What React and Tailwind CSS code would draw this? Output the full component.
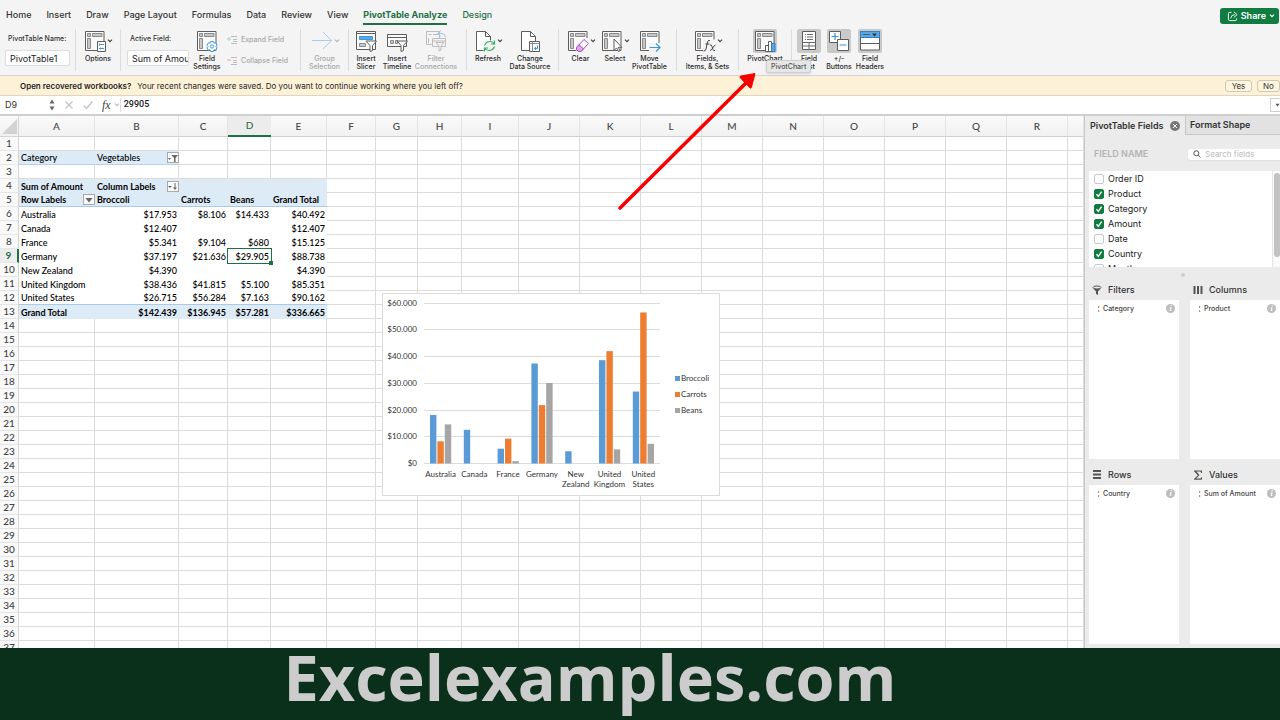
import React from "react";

const INK = "#5c5c5c";
const BLUE = "#3a96dd";

const COLUMNS = [
  ["A", "w-[76px]"], ["B", "w-[84px]"], ["C", "w-[49px]"], ["D", "w-[43px]"],
  ["E", "w-[56px]"], ["F", "w-[49px]"], ["G", "w-[42px]"], ["H", "w-[44px]"],
  ["I", "w-[57px]"], ["J", "w-[61px]"], ["K", "w-[61px]"], ["L", "w-[61px]"],
  ["M", "w-[61px]"], ["N", "w-[61px]"], ["O", "w-[61px]"], ["P", "w-[61px]"],
  ["Q", "w-[61px]"], ["R", "w-[61px]"], ["", "w-auto"],
];

const ROWS = {
  2: ["Category", "Vegetables"],
  4: ["Sum of Amount", "Column Labels"],
  5: ["Row Labels", "Broccoli", "Carrots", "Beans", "Grand Total"],
  6: ["Australia", "$17.953", "$8.106", "$14.433", "$40.492"],
  7: ["Canada", "$12.407", "", "", "$12.407"],
  8: ["France", "$5.341", "$9.104", "$680", "$15.125"],
  9: ["Germany", "$37.197", "$21.636", "$29.905", "$88.738"],
  10: ["New Zealand", "$4.390", "", "", "$4.390"],
  11: ["United Kingdom", "$38.436", "$41.815", "$5.100", "$85.351"],
  12: ["United States", "$26.715", "$56.284", "$7.163", "$90.162"],
  13: ["Grand Total", "$142.439", "$136.945", "$57.281", "$336.665"],
};

const CHART = [
  [["Australia"], [17953, 8106, 14433]],
  [["Canada"], [12407, 0, 0]],
  [["France"], [5341, 9104, 680]],
  [["Germany"], [37197, 21636, 29905]],
  [["New", "Zealand"], [4390, 0, 0]],
  [["United", "Kingdom"], [38436, 41815, 5100]],
  [["United", "States"], [26715, 56284, 7163]],
];
const SERIES = [["Broccoli", "#5b9bd5"], ["Carrots", "#ed7d31"], ["Beans", "#a5a5a5"]];

function Icon({ children }) {
  return (
    <svg viewBox="0 0 22 22" className="size-[22px] shrink-0" fill="none" stroke={INK} strokeWidth="1" aria-hidden="true">
      {children}
    </svg>
  );
}

function Pivot({ children }) {
  return (
    <Icon>
      <path d="M1.500 1.500h18.500v19h-18.500z" fill="#fafafa" />
      <path d="M3.500 3.500h3v3h-3zM8.500 3.500h9.500v3h-9.500zM3.500 8.500h3v10h-3z" fill="#c8c8c8" stroke="#8a8a8a" />
      {children}
    </Icon>
  );
}

const Funnel = ({ x = 11, y = 11, color = INK }) => (
  <path d={`M${x} ${y}h10.500l-4 4.500v5l-2.500 1v-6z`} fill="#fff" stroke={color} />
);

const icons = {
  options: (
    <Pivot>
      <path d="M13.500 11.500h8v10h-8z" fill="#fff" />
      <path d="M15 14.500h5M15 18.500h5" stroke={BLUE} />
      <path d="M15.500 13.500v2M16.500 17.500v2" stroke={BLUE} />
    </Pivot>
  ),
  settings: (
    <Pivot>
      <path d="M14.600 11.500h2.800l.5 1.700 1.700-.4 1.500 2.500-1.200 1.200 1.200 1.300-1.500 2.400-1.700-.4-.5 1.700h-2.800l-.5-1.700-1.700.4-1.500-2.400 1.200-1.300-1.200-1.200 1.500-2.500 1.700.4z" fill="#fff" stroke={BLUE} />
      <circle cx="16" cy="16.500" r="1.600" stroke={BLUE} />
    </Pivot>
  ),
  group: (
    <Icon>
      <path d="M1 10.500h19M12 2l8.500 8.500L12 19" stroke="#a9cdee" />
    </Icon>
  ),
  slicer: (
    <Icon>
      <path d="M1.500 1.500h19v18h-19z" fill="#fafafa" />
      <path d="M1.500 3.500h19" />
      <path d="M4.500 6.500h13v3h-13z" fill="#5ba7e6" stroke={BLUE} />
      <path d="M4.500 13.500h6v3h-6z" fill="#c8c8c8" stroke="#8a8a8a" />
      <Funnel />
    </Icon>
  ),
  timeline: (
    <Icon>
      <path d="M1.500 4.500h19v12h-19z" fill="#fafafa" />
      <path d="M1.500 7.500h19" />
      <path d="M4.500 10.500h3v3h-3zM9.500 10.500h2v3h-2z" fill="#c8c8c8" stroke="#8a8a8a" />
      <Funnel />
    </Icon>
  ),
  connections: (
    <Icon>
      <g stroke="#bdbdbd">
        <path d="M1.500 1.500h13v13h-13z" />
        <path d="M3.500 4.500h3M8 4.500h5M3.500 8v5" />
        <path d="M7.500 8.500h13v8h-13z" fill="#f4f4f4" />
        <path d="M7.500 11h13" />
        <path d="M11 12.500h8l-3 3.500v4l-2 1v-5z" fill="#f4f4f4" />
      </g>
      <path d="M13 3.500h4q3.500 0 3.500 4M16 .5l-3.500 3L16 6.500" stroke="#9fc6ea" />
    </Icon>
  ),
  refresh: (
    <Icon>
      <path d="M2.500 1.500h9l5 5v14h-14z" fill="#fff" />
      <path d="M11.500 1.500v5h5" />
      <path d="M9.500 10.500H22V22H9.500z" fill="#f4f4f4" stroke="none" />
      <path d="M10.500 15.500q1.500-4 5.500-4 3 0 4.500 2.500M20.500 10.500V14H17M20.500 16.500q-1.500 4-5.500 4-3 0-4.500-2.500M10.500 21.500V18H14" stroke="#2fae5f" strokeWidth="1.200" />
    </Icon>
  ),
  source: (
    <Icon>
      <path d="M2.500 1.500h9l5 5v14h-14z" fill="#fff" />
      <path d="M11.500 1.500v5h5" />
      <path d="M10.500 11.500h10v10h-10z" fill="#fff" />
      <path d="M10.500 13.500h10M13.500 11.500v10" stroke="#8a8a8a" />
      <path d="M15.500 18.500h3v-3M17 17l-1.500 1.500L17 20" stroke={BLUE} />
    </Icon>
  ),
  clear: (
    <Pivot>
      <path d="M8.500 16 16 8h6v13H9.500z" fill="#f4f4f4" stroke="none" />
      <path d="m9.500 17.500 7.500-8 4.500 4-7.500 8h-2.500l-2-2z" fill="#fff" stroke="#a94fc0" />
      <path d="m9.500 17.500 2.500-2.700 4.500 4-2.500 2.700h-2.500l-2-2z" fill="#dca6ea" stroke="#a94fc0" />
    </Pivot>
  ),
  select: (
    <Pivot>
      <path d="M13 9v11.500l2.600-2.600 1.700 3.600 1.700-.8-1.700-3.400h3.500z" fill="#fff" />
    </Pivot>
  ),
  move: (
    <Pivot>
      <path d="M10 13h12v9H10z" fill="#f4f4f4" stroke="none" />
      <path d="M10.500 17.500h10.500M17 13.500l4 4-4 4" stroke={BLUE} strokeWidth="1.200" />
    </Pivot>
  ),
  fields: (
    <Pivot>
      <path d="M9 9.500h13V22H9z" fill="#f4f4f4" stroke="none" />
      <path d="M9.500 21q2 .3 2.500-2l1.500-7q.5-2 2.500-1.500M11.500 14h4M16 15q1.500-.5 2 1.500l1 3q.5 1.500 2 1M21.500 15q-1 0-2.500 2.500-1.500 3-3 3" stroke="#444" />
    </Pivot>
  ),
  chart: (
    <Pivot>
      <path d="M11.500 15.500h3v6h-3zM14.500 11.500h3v10h-3z" fill="#fff" />
      <path d="M17.500 13.500h3.500v8h-3.500z" fill="#5ba7e6" stroke="#2b7fc4" />
    </Pivot>
  ),
  list: (
    <Icon>
      <path d="M4.500 1.500h13v18h-13z" fill="#fff" />
      <path d="M4.500 12.500h13M4.500 16h13M11 12.500v7M7 4.500h1M9 4.500h6M7 7h1M9 7h6M7 9.500h1M9 9.500h6" stroke="#6a6a6a" />
    </Icon>
  ),
  plusminus: (
    <Icon>
      <path d="M1.500 1.500h11v11h-11z" fill="#fff" />
      <path d="M9.500 9.500h11v11h-11z" fill="#fff" />
      <path d="M3.500 6.500h7M7 3v7M11.500 15h7" stroke={BLUE} strokeWidth="1.200" />
    </Icon>
  ),
  headers: (
    <Icon>
      <path d="M1.500 1.500h19v18.500h-19z" fill="#fff" />
      <path d="M1.500 1.500h19v6h-19z" fill="#5ba7e6" stroke="#2b7fc4" />
      <path d="M1.500 13.500h19M4 4.500h7" />
      <path d="M13 3.500h5l-2.500 3z" fill="#333" stroke="none" />
    </Icon>
  ),
};

function Chevron({ className = "text-[#444]" }) {
  return (
    <svg viewBox="0 0 6 4" className={`h-1 w-[6px] shrink-0 ${className}`} fill="none" stroke="currentColor" strokeWidth="1.200" aria-hidden="true">
      <path d="M1 .7l2 2 2-2" />
    </svg>
  );
}

function Tool({ icon, lines, width, menu, active, disabled }) {
  return (
    <button type="button" disabled={disabled} className={`flex shrink-0 flex-col items-center ${width} ${disabled ? "text-[#a8a8a8]" : "text-[#2a2a2a]"}`}>
      <span className="flex items-center">
        <span className={`flex size-6 items-center justify-center rounded-xs ${active ? "bg-[#c9c9c9]" : ""}`}>{icons[icon]}</span>
        {menu && <Chevron className={disabled ? "text-[#b5b5b5]" : "text-[#444]"} />}
      </span>
      <span className="mt-0.5 flex flex-col items-center text-[7px] leading-2 font-medium whitespace-nowrap">
        {lines.map((l) => <span key={l}>{l}</span>)}
      </span>
    </button>
  );
}

const Sep = () => <span className="h-[42px] w-px shrink-0 bg-[#dcdcdc]" />;

function SmallTool({ label, color, mark }) {
  return (
    <button type="button" disabled className="flex items-center gap-1 text-[7px] leading-3 font-medium whitespace-nowrap text-[#a8a8a8]">
      <svg viewBox="0 0 10 8" className="h-2 w-2.5" fill="none" stroke="#bdbdbd" aria-hidden="true">
        <path d="M4 .5h6M6 3.500h4M6 5.500h4M4 7.500h6" />
        <path d={mark} stroke={color} />
      </svg>
      {label}
    </button>
  );
}

function Ribbon() {
  const tabs = ["Home", "Insert", "Draw", "Page Layout", "Formulas", "Data", "Review", "View"];
  const input = "mt-[5px] h-4 w-full rounded-xs border border-[#dcdcdc] bg-white pl-1 text-[9px] text-[#222]";
  return (
    <header className="shrink-0 border-b border-[#d4d4d4] bg-[#f4f4f4]">
      <div className="flex h-7 items-center justify-between pt-1 pl-1.5">
        <nav className="flex gap-[15px] text-[9px] leading-4 font-medium whitespace-nowrap text-[#333]">
          {tabs.map((t) => <a key={t} href="#">{t}</a>)}
          <a href="#" className="border-b-2 border-[#1e7145] font-bold text-[#1e7145]">PivotTable Analyze</a>
          <a href="#" className="text-[#1e7145]">Design</a>
        </nav>
        <button type="button" className="mr-px flex h-4 items-center gap-[3px] rounded-[3px] bg-[#107c41] pr-1 pl-[7px] text-[9px] font-semibold text-white">
          <svg viewBox="0 0 12 12" className="size-[11px]" fill="none" stroke="currentColor" strokeWidth="1" aria-hidden="true">
            <path d="M5 1.500H3q-1.500 0-1.500 1.500v6q0 1.500 1.500 1.500h6q1.500 0 1.500-1.500V8M4 8q.5-4 4.500-4M7.500 1l3.500 3-3.500 3" />
          </svg>
          Share
          <Chevron className="text-white" />
        </button>
      </div>
      <div className="flex h-[47px] overflow-hidden pt-px">
        <div className="flex w-[75px] shrink-0 flex-col px-[5px] pt-1">
          <label htmlFor="pt-name" className="pl-[3px] text-[7px] leading-3 font-medium whitespace-nowrap text-[#333]">PivotTable Name:</label>
          <input id="pt-name" defaultValue="PivotTable1" className={input} />
        </div>
        <Sep />
        <Tool icon="options" lines={["Options"]} width="w-[44px]" menu />
        <Sep />
        <div className="flex w-[72px] shrink-0 flex-col pt-1 pr-1 pl-[6px]">
          <label htmlFor="active-field" className="pl-[3px] text-[7px] leading-3 font-medium whitespace-nowrap text-[#333]">Active Field:</label>
          <input id="active-field" defaultValue="Sum of Amount" className={input} />
        </div>
        <Tool icon="settings" lines={["Field", "Settings"]} width="w-[28px]" />
        <div className="flex w-[79px] shrink-0 flex-col gap-[9px] pt-[5px] pl-[6px]">
          <SmallTool label="Expand Field" color="#a5d8b8" mark="M0 3h4M2 1v4" />
          <SmallTool label="Collapse Field" color="#e5a8a8" mark="M0 3h4" />
        </div>
        <Sep />
        <Tool icon="group" lines={["Group", "Selection"]} width="w-[47px]" menu disabled />
        <Sep />
        <div className="flex pr-[5px]">
          <Tool icon="slicer" lines={["Insert", "Slicer"]} width="w-[34px]" />
          <Tool icon="timeline" lines={["Insert", "Timeline"]} width="w-[28px]" />
          <Tool icon="connections" lines={["Filter", "Connections"]} width="w-[50px]" disabled />
        </div>
        <Sep />
        <div className="flex pr-[7px]">
          <Tool icon="refresh" lines={["Refresh"]} width="w-[42px]" menu />
          <Tool icon="source" lines={["Change", "Data Source"]} width="w-[42px]" />
        </div>
        <Sep />
        <div className="flex pr-[5px]">
          <Tool icon="clear" lines={["Clear"]} width="w-[43px]" menu />
          <Tool icon="select" lines={["Select"]} width="w-[26px]" menu />
          <Tool icon="move" lines={["Move", "PivotTable"]} width="w-[43px]" />
        </div>
        <Sep />
        <Tool icon="fields" lines={["Fields,", "Items, & Sets"]} width="w-[61px]" menu />
        <Sep />
        <Tool icon="chart" lines={["PivotChart"]} width="w-[52px]" active />
        <Sep />
        <Tool icon="list" lines={["Field", "List"]} width="w-[34px]" active />
        <Tool icon="plusminus" lines={["+/-", "Buttons"]} width="w-[26px]" active />
        <Tool icon="headers" lines={["Field", "Headers"]} width="w-[36px]" active />
      </div>
    </header>
  );
}

function RecoveryBar() {
  const btn = "h-3 rounded-[3px] border border-[#cfc8b4] bg-[#fdf5dd] leading-none text-[#333]";
  return (
    <div className="flex h-5 shrink-0 items-center justify-between border-b border-[#ddd6c2] bg-[#fdf2d8] pl-5 text-[8px] whitespace-nowrap text-[#1f1f1f]">
      <p className="flex gap-[6px]">
        <strong className="font-semibold">Open recovered workbooks?</strong>
        <span>Your recent changes were saved. Do you want to continue working where you left off?</span>
      </p>
      <div className="flex gap-[5px]">
        <button type="button" className={`${btn} w-[27px]`}>Yes</button>
        <button type="button" className={`${btn} w-[23px]`}>No</button>
      </div>
    </div>
  );
}

function FormulaBar() {
  return (
    <div className="flex h-5 shrink-0 items-center border-b-2 border-[#cfcfcf] bg-white">
      <input aria-label="Name box" defaultValue="D9" className="w-[49px] pl-[5px] text-[9px] text-[#333]" />
      <svg viewBox="0 0 6 12" className="h-3 w-[6px]" fill="#666" aria-hidden="true">
        <path d="M3 .5 5.500 4.500h-5zM3 11.500.5 7.500h5z" />
      </svg>
      <div className="ml-[9px] flex items-center gap-[9px]">
        <svg viewBox="0 0 10 10" className="size-2.5" stroke="#c4c4c4" strokeWidth="1.300" fill="none" aria-hidden="true"><path d="m1.500 1.500 7 7m0-7-7 7" /></svg>
        <svg viewBox="0 0 10 10" className="size-2.5" stroke="#c4c4c4" strokeWidth="1.300" fill="none" aria-hidden="true"><path d="m.5 5.500 3 3 6-7" /></svg>
        <span className="font-['Liberation_Serif',serif] text-[12px] leading-3 text-[#444] italic">fx</span>
      </div>
      <Chevron className="ml-[3px] text-[#bbb]" />
      <input aria-label="Formula" defaultValue="29905" className="min-w-0 flex-1 border-l border-[#ddd] pl-[3px] font-[Roboto,sans-serif] text-[9px] font-medium text-[#222]" />
      <button type="button" aria-label="Expand formula bar" className="flex h-[14px] w-2.5 items-center border border-r-0 border-[#d0d0d0] pl-1">
        <svg viewBox="0 0 6 4" className="h-1 w-[6px]" fill="#555" aria-hidden="true"><path d="M.5.5h5L3 3.800z" /></svg>
      </button>
    </div>
  );
}

function CellButton({ label, children }) {
  return (
    <button type="button" aria-label={label} className="flex h-[11px] w-3 shrink-0 items-center justify-center border border-[#a9a9a9] bg-[#fafafa]">
      <svg viewBox="0 0 10 8" className="h-2 w-2.5" fill="#666" aria-hidden="true">{children}</svg>
    </button>
  );
}

const CELL_BUTTONS = {
  "2-1": <CellButton label="Filter category"><path d="M0 4h3L1.500 6zM3.500 1H10L7.500 4v4H6V4z" /></CellButton>,
  "4-1": <CellButton label="Sort columns"><path d="M0 4h4L2 6zM6.500 1h1v4.500H9L7 8 5 5.500h1.500z" /></CellButton>,
  "5-0": <CellButton label="Filter rows"><path d="M1.500 2h7L5 6.500z" /></CellButton>,
};

function cellStyle(row, col) {
  const inPivot = row >= 4 && row <= 13 && col <= 4;
  if (row === 2 && col <= 1) return "border-b border-[#b4d2ec] bg-[#ddebf7] font-medium";
  if (!inPivot) return "border-r border-b border-[#dcdcdc]";
  if (row === 4) return "bg-[#ddebf7] font-bold";
  if (row === 5) return "border-b border-[#a9cbe9] bg-[#ddebf7] font-bold";
  if (row === 12) return "border-b border-[#a9cbe9] font-medium";
  if (row === 13) return "bg-[#ddebf7] font-bold";
  return "font-medium";
}

function Cell({ row, col }) {
  const text = ROWS[row]?.[col] ?? "";
  const selected = row === 9 && col === 3;
  const numeric = text.startsWith("$");
  return (
    <td className={`relative h-[14px] p-0 text-black ${cellStyle(row, col)}`}>
      {text && (
        <div className={`flex h-[13px] items-center whitespace-nowrap ${numeric ? "justify-end pr-0.5" : "justify-between pl-0.5"}`}>
          <span>{text}</span>
          {CELL_BUTTONS[`${row}-${col}`]}
        </div>
      )}
      {selected && (
        <span className="absolute -inset-px border border-[#1e7145]">
          <span className="absolute -right-[2px] -bottom-[2px] size-1 bg-[#1e7145]" />
        </span>
      )}
    </td>
  );
}

function Chart() {
  const y = (v) => 170 - (v / 60000) * 160.5;
  return (
    <svg viewBox="0 0 338 203" className="absolute top-[177px] left-[382px] h-[203px] w-[338px] font-[Lato,sans-serif]" role="img" aria-label="Sales by country">
      <rect x=".5" y=".5" width="337" height="202" fill="#fff" stroke="#dcdcdc" />
      {[0, 1, 2, 3, 4, 5, 6].map((i) => (
        <g key={i}>
          <path d={`M42 ${Math.round(y(i * 10000)) + 0.5}h236`} stroke="#dcdcdc" />
          <text x="35" y={y(i * 10000) + 3} textAnchor="end" fontSize="8" fill="#333">{i ? `$${i}0.000` : "$0"}</text>
        </g>
      ))}
      {CHART.map(([lines, values], g) => {
        const center = 58.5 + g * 33.8;
        return (
          <g key={lines.join(" ")}>
            {values.map((v, s) => v > 0 && (
              <rect key={s} x={center - 10.5 + s * 7.4} y={y(v)} width="6.400" height={170.5 - y(v)} fill={SERIES[s][1]} />
            ))}
            {lines.map((l, i) => (
              <text key={l} x={center} y={183.5 + i * 10.5} textAnchor="middle" fontSize="8" fill="#333">{l}</text>
            ))}
          </g>
        );
      })}
      {SERIES.map(([name, color], i) => (
        <g key={name}>
          <rect x="293" y={83 + i * 16} width="5" height="5" fill={color} />
          <text x="299" y={88 + i * 16} fontSize="8" fill="#333">{name}</text>
        </g>
      ))}
    </svg>
  );
}

function Sheet() {
  const rows = Array.from({ length: 37 }, (_, i) => i + 1);
  return (
    <main className="relative min-w-0 flex-1 overflow-hidden bg-white">
      <table className="w-full table-fixed border-separate border-spacing-0 font-[Lato,sans-serif] text-[9px] leading-[13px]">
        <thead>
          <tr className="h-[21px] bg-gradient-to-b from-[#fafafa] to-[#f1f1f1] text-[10px] text-[#444]">
            <th className="w-[19px] border-r border-b border-[#d4d4d4] p-0">
              <svg viewBox="0 0 18 20" className="h-5 w-[18px]" fill="#d2d2d2" aria-hidden="true"><path d="M17 3v15H2z" /></svg>
            </th>
            {COLUMNS.map(([name, width]) => (
              <th key={name} scope="col" className={`${width} p-0 font-medium ${name === "D" ? "border-b-2 border-[#1e7145] bg-[#ececec] text-[#1e7145]" : "border-r border-b border-r-[#e4e4e4] border-b-[#cfcfcf]"}`}>{name}</th>
            ))}
          </tr>
        </thead>
        <tbody>
          {rows.map((r) => (
            <tr key={r} className="h-[14px]">
              <th scope="row" className={`border-b border-b-[#e6e6e6] p-0 text-[10px] ${r === 9 ? "border-r-2 border-r-[#1e7145] bg-[#ececec] font-bold text-[#1e7145]" : "border-r border-r-[#d4d4d4] bg-[#f9f9f9] font-medium text-[#444]"}`}>{r}</th>
              {COLUMNS.map(([name], c) => <Cell key={name} row={r} col={c} />)}
            </tr>
          ))}
        </tbody>
      </table>
      <Chart />
    </main>
  );
}

const FIELDS = [["Order ID", false], ["Product", true], ["Category", true], ["Amount", true], ["Date", false], ["Country", true], ["Months", false]];

function ZoneIcon({ kind }) {
  const shapes = {
    Filters: <><ellipse cx="5" cy="2.500" rx="4" ry="1.500" fill="none" stroke="#555" /><path d="M1 3l3 3.500V9l2 1V6.500L9 3q-4 2-8 0z" /></>,
    Columns: <path d="M.5 1h2v8h-2zM4 1h2v8H4zM7.500 1h2v8h-2z" />,
    Rows: <path d="M1 0h8v2H1zM1 3.500h8v2H1zM1 7h8v2H1z" />,
    Values: <path d="M1 .5h8v2.500h-.8L7.500 1.500h-4L6.500 5 3.200 8.500h4.500L8.500 7h.7L8.800 9.800H1v-.7L4.800 5.200 1 1.200z" />,
  };
  return <svg viewBox="0 0 10 10" className="size-2.5" fill="#555" aria-hidden="true">{shapes[kind]}</svg>;
}

function Zone({ title, item }) {
  return (
    <section className="flex min-h-0 min-w-0 flex-1 flex-col">
      <h3 className="flex h-[26px] items-center gap-[6px] pt-1.5 pl-[3px] text-[9px] font-medium text-[#333]">
        <ZoneIcon kind={title} />
        {title}
      </h3>
      <div className="flex-1 bg-white pt-[3px]">
        <div className="flex items-center justify-between pr-1 pl-2 text-[7px] leading-[11px] font-medium whitespace-nowrap text-[#444]">
          <span className="flex items-center gap-[3px]">
            <svg viewBox="0 0 3 6" className="h-[6px] w-[3px]" fill="#999" aria-hidden="true"><path d="M1 0h1.200v2H1zM1 4h1.200v2H1z" /></svg>
            {item}
          </span>
          <button type="button" aria-label={`${item} settings`} className="flex size-[9px] items-center justify-center rounded-full bg-[#bdbdbd] font-['Liberation_Serif',serif] text-[8px] leading-none font-bold text-white italic">i</button>
        </div>
      </div>
    </section>
  );
}

function FieldsPane() {
  return (
    <aside className="flex w-[196px] shrink-0 flex-col overflow-hidden border-l border-[#c8c8c8] bg-[#ebebeb] pb-1">
      <div className="flex h-[19px] shrink-0 text-[9px] font-semibold whitespace-nowrap text-[#333]">
        <button type="button" className="flex w-[100px] items-center justify-between pr-[5px] pl-[5px]">
          PivotTable Fields
          <svg viewBox="0 0 10 10" className="size-2.5" aria-hidden="true">
            <circle cx="5" cy="5" r="5" fill="#777" />
            <path d="m3 3 4 4m0-4-4 4" stroke="#fff" />
          </svg>
        </button>
        <button type="button" className="flex flex-1 items-center border-b border-l border-[#c8c8c8] bg-[#e2e2e2] pl-1">Format Shape</button>
      </div>
      <div className="flex h-9 shrink-0 items-center justify-between pt-0.5 pl-[9px]">
        <label htmlFor="field-search" className="text-[9px] font-semibold text-[#b4b4b4]">FIELD NAME</label>
        <div className="flex h-[11px] w-[92px] items-center gap-1 rounded-l-[3px] bg-white pl-[5px] shadow-xs">
          <svg viewBox="0 0 8 8" className="size-2" fill="none" stroke="#555" aria-hidden="true"><circle cx="3.300" cy="3.300" r="2.500" /><path d="m5.200 5.200 2.300 2.300" /></svg>
          <input id="field-search" placeholder="Search fields" className="min-w-0 flex-1 text-[8px] leading-[10px] placeholder:text-[#bbb]" />
        </div>
      </div>
      <div className="ml-1 flex h-24 shrink-0 overflow-hidden bg-white">
        <ul className="flex-1 pl-[5px]">
          {FIELDS.map(([name, on]) => (
            <li key={name}>
              <label className="flex h-[15px] items-center gap-1 text-[9px] text-[#222]">
                <span className="grid size-2.5">
                  <input type="checkbox" defaultChecked={on} className="peer col-start-1 row-start-1 size-2.5 appearance-none rounded-xs border border-[#c8c8c8] bg-white checked:border-[#107c41] checked:bg-[#107c41]" />
                  <svg viewBox="0 0 10 10" className="pointer-events-none invisible col-start-1 row-start-1 size-2.5 peer-checked:visible" fill="none" stroke="#fff" strokeWidth="1.400" aria-hidden="true"><path d="m2.500 5.300 1.800 2L7.600 2.700" /></svg>
                </span>
                {name}
              </label>
            </li>
          ))}
        </ul>
        <div className="w-2 border-l border-[#e4e4e4] bg-[#fafafa] pt-0.5 pl-px">
          <div className="h-[84px] rounded-[3px] bg-[#c2c2c2]" />
        </div>
      </div>
      <div className="flex h-[7px] shrink-0 items-start justify-center pt-1.5"><span className="size-1 shrink-0 rounded-full bg-[#cfcfcf]" /></div>
      <div className="flex min-h-0 flex-1 gap-[11px] pl-1">
        <Zone title="Filters" item="Category" />
        <Zone title="Columns" item="Product" />
      </div>
      <div className="flex min-h-0 flex-1 gap-[11px] pl-1">
        <Zone title="Rows" item="Country" />
        <Zone title="Values" item="Sum of Amount" />
      </div>
    </aside>
  );
}

export default function App() {
  return (
    <div className="relative flex h-screen flex-col overflow-hidden bg-white font-[Inter,sans-serif]">
      <Ribbon />
      <RecoveryBar />
      <FormulaBar />
      <div className="flex min-h-0 flex-1">
        <Sheet />
        <FieldsPane />
      </div>
      <footer className="flex h-[72px] shrink-0 justify-center bg-[#0a301c] pr-[100px]">
        <p className="font-['Open_Sans',sans-serif] text-[63px] leading-[58px] font-bold text-[#cccccc]">Excelexamples.com</p>
      </footer>
      <div role="tooltip" className="absolute top-[60px] left-[766px] rounded-xs border border-[#cfcfcf] bg-[#e6e6e6] px-1 text-[7px] leading-[11px] font-medium whitespace-nowrap text-[#555] shadow-sm">PivotChart</div>
      <svg viewBox="0 0 140 140" className="pointer-events-none absolute top-[71px] left-[617px] size-[140px]" aria-hidden="true">
        <path d="M3 137 132 9" stroke="#f80000" strokeWidth="3.500" strokeLinecap="round" />
        <path d="M138 2.500 124 5q-2 .5-.5 2l9 9.500q1.500 1.500 2-.5z" fill="#f80000" stroke="#f80000" strokeLinejoin="round" />
      </svg>
    </div>
  );
}
